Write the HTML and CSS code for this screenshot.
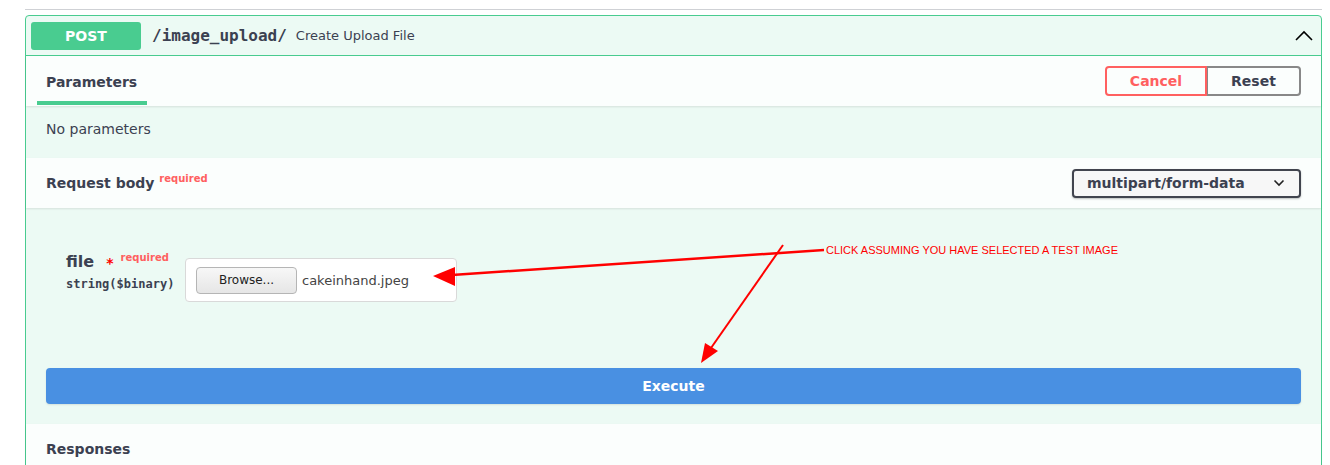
FILE: index.html
```html
<!DOCTYPE html>
<html>
<head>
<meta charset="utf-8">
<link rel="stylesheet" href="styles.css">
</head>
<body>
<div class="page">
  <div class="rule"></div>
  <div class="opblock">
    <div class="summary">
      <span class="method">POST</span>
      <span class="path">/image_upload/</span>
      <span class="desc">Create Upload File</span>
      <svg class="toggle" width="20" height="20" viewBox="0 0 20 20"><path d="M2 14 L10 6 L18 14" fill="none" stroke="#000" stroke-width="1.6"/></svg>
    </div>
    <div class="section-header">
      <div class="tab">Parameters</div>
      <div class="btn-group">
        <button class="btn cancel">Cancel</button><button class="btn reset">Reset</button>
      </div>
    </div>
    <div class="desc-wrap"><p>No parameters</p></div>
    <div class="section-header rb">
      <div class="title">Request body <sup class="req">required</sup></div>
      <div class="select"><span>multipart/form-data</span><svg width="12" height="8" viewBox="0 0 12 8"><path d="M1.5 1.5 L6 6 L10.5 1.5" fill="none" stroke="#222" stroke-width="1.6"/></svg></div>
    </div>
    <div class="body">
      <div class="param-row">
        <div class="param-name">
          <div class="name">file<span class="star">*</span><sup class="req">required</sup></div>
          <div class="type">string($binary)</div>
        </div>
        <div class="file-input"><span class="browse">Browse...</span><span class="fname">cakeinhand.jpeg</span></div>
      </div>
      <button class="execute">Execute</button>
    </div>
    <div class="section-header resp"><div class="title">Responses</div></div>
  </div>
</div>
<svg class="annot" width="1330" height="465" viewBox="0 0 1330 465">
  <line x1="824" y1="250" x2="452" y2="275" stroke="#ff0000" stroke-width="2.5"/>
  <polygon points="433,276 455,267 455,286" fill="#ff0000"/>
  <line x1="783" y1="245" x2="711" y2="348" stroke="#ff0000" stroke-width="2"/>
  <polygon points="701,363 705,343 718,351" fill="#ff0000"/>
</svg>
<div class="annot-text">CLICK ASSUMING YOU HAVE SELECTED A TEST IMAGE</div>
</body>
</html>
```
FILE: styles.css
```css
html, body { margin: 0; padding: 0; background: #fff; }
body { font-family: "DejaVu Sans", sans-serif; color: #3b4151; position: relative; width: 1330px; height: 465px; overflow: hidden; }
.page { padding: 0 8px 0 25px; }
.rule { margin-top: 9px; height: 1px; background: #cfd1d5; margin-bottom: 5px; }
.opblock { border: 1px solid #49cc90; border-radius: 4px; background: rgba(73,204,144,.1); height: 480px; }
.summary { height: 39px; display: flex; align-items: center; padding: 0 5px; border-bottom: 1px solid #49cc90; }
.method { width: 110px; height: 28px; line-height: 28px; background: #49cc90; color: #fff; font-weight: bold; font-size: 14px; text-align: center; border-radius: 3px; }
.path { font-family: "DejaVu Sans Mono", monospace; font-weight: bold; font-size: 16px; padding: 0 10px 0 11px; color: #3b4151; }
.desc { font-size: 13px; color: #3b4151; flex: 1; margin-left: -1px; }
.toggle { margin-right: 2px; margin-top: 1px; }
.section-header { height: 50px; display: flex; align-items: center; justify-content: space-between; padding: 0 20px; background: rgba(255,255,255,.8); box-shadow: 0 1px 2px rgba(0,0,0,.1); position: relative; }
.tab { align-self: flex-start; box-sizing: border-box; height: 49px; width: 110px; padding-top: 6px; padding-left: 9px; margin-left: -9px; border-bottom: 4px solid #49cc90; display: flex; align-items: center; font-weight: bold; font-size: 14px; }
.btn-group { display: flex; }
.btn { font-family: "DejaVu Sans", sans-serif; font-weight: bold; font-size: 14px; height: 30px; background: transparent; border: 2px solid #888; cursor: pointer; padding: 0; }
.cancel { width: 102px; color: #ff6060; border-color: #ff6060; border-radius: 4px 0 0 4px; }
.reset { width: 94px; color: #3b4151; border-color: #888; border-radius: 0 4px 4px 0; border-left-width: 1px; }
.desc-wrap { padding: 15px 20px 20px; }
.desc-wrap p { margin: 0; font-size: 14px; line-height: 17px; }
.title { font-weight: bold; font-size: 14px; line-height: 17px; }
.req { color: #ff6060; font-size: 10px; font-weight: bold; vertical-align: baseline; line-height: 0; position: relative; top: -6px; margin-left: 0; }
.select { box-sizing: border-box; width: 229px; height: 29px; border: 2px solid #41444e; border-radius: 4px; background: #f7f7f7; box-shadow: 0 1px 2px rgba(0,0,0,.25); display: flex; align-items: center; justify-content: space-between; padding: 0 14px 0 13px; font-weight: bold; font-size: 14px; color: #3b4151; }
.body { padding: 44px 20px 20px; }
.param-row { display: flex; align-items: flex-start; padding-left: 20px; }
.param-name { width: 119px; }
.name { font-weight: bold; font-size: 16px; line-height: 19px; height: 19px; }
.star { color: #ff0000; font-size: 14px; margin-left: 12px; position: relative; top: 1px; line-height: 0; }
.name .req { margin-left: 7px; top: -6px; }
.type { font-family: "DejaVu Sans Mono", monospace; font-weight: bold; font-size: 12px; line-height: 14px; margin-top: 6px; color: #3b4151; }
.file-input { box-sizing: border-box; margin-top: 6px; width: 272px; height: 44px; background: #fff; border: 1px solid #d9d9d9; border-radius: 4px; display: flex; align-items: center; padding: 0 10px; }
.browse { box-sizing: border-box; width: 101px; height: 27px; border: 1px solid #b5b5b5; border-radius: 4px; background: linear-gradient(#f7f7f7, #e6e6e6); font-size: 12px; color: #222; display: flex; align-items: center; justify-content: center; }
.fname { margin-left: 5px; font-size: 13px; color: #444; }
.execute { display: block; width: 100%; height: 36px; margin-top: 66px; background: #4990e2; border: none; border-radius: 4px; color: #fff; font-family: "DejaVu Sans", sans-serif; font-weight: bold; font-size: 14px; box-shadow: 0 1px 2px rgba(0,0,0,.1); }
.resp { justify-content: flex-start; }
.annot { position: absolute; top: 0; left: 0; pointer-events: none; }
.annot-text { position: absolute; left: 826px; top: 244px; font-family: "Liberation Sans", Arial, sans-serif; font-size: 11px; line-height: 13px; color: #ff0000; white-space: nowrap; }
```
